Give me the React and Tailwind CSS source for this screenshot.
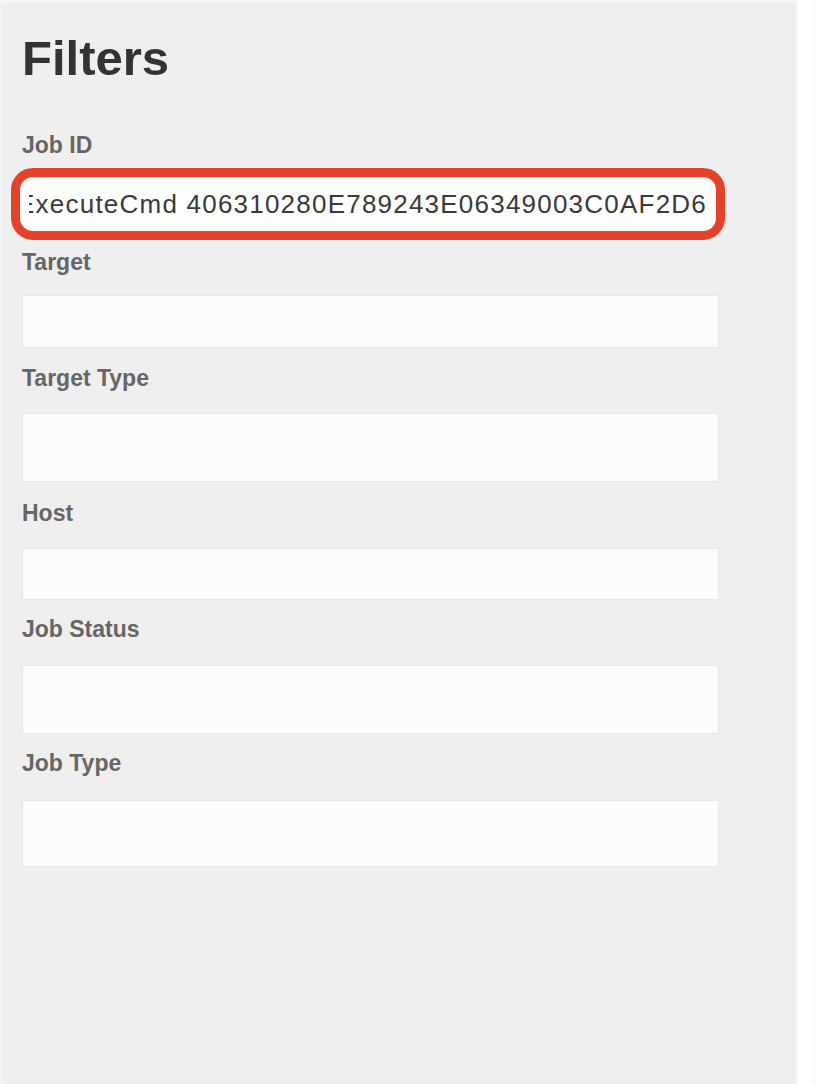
export default function App() {
  return (
    <div className="flex w-[818px] h-[1084px] bg-white font-['Liberation_Sans',Arial,sans-serif]">
      <div className="w-[797px] h-[1084px] bg-[#efefef] border-t-[3px] border-l border-[#f6f6f6] pl-[21px] pt-[31px]">
        <h1 className="text-[49px] leading-[48px] font-bold text-[#333]">Filters</h1>

        <label className="block mt-[52px] text-[23px] leading-[23px] font-bold text-[#666]">Job ID</label>
        <div className="mt-[11px] ml-[-11px] w-[714px] h-[72px] border-[9px] border-[#e8412a] rounded-[22px] bg-[#e8412a]">
          <div className="h-full bg-[#fdfdfd] rounded-[13px] flex items-center px-[9px]">
            <div className="flex-1 flex justify-end overflow-hidden whitespace-nowrap text-[26px] tracking-[1.22px] text-[#3a3a3a]">
              ExecuteCmd 406310280E789243E06349003C0AF2D6
            </div>
          </div>
        </div>

        <label className="block mt-[11px] text-[23px] leading-[23px] font-bold text-[#666]">Target</label>
        <div className="mt-[21px] w-[697px] h-[53px] bg-[#fbfcfb] border border-[#e8e8e8]" />

        <label className="block mt-[19px] text-[23px] leading-[23px] font-bold text-[#666]">Target Type</label>
        <div className="mt-[23px] w-[697px] h-[69px] bg-[#fbfcfb] border border-[#e8e8e8]" />

        <label className="block mt-[20px] text-[23px] leading-[23px] font-bold text-[#666]">Host</label>
        <div className="mt-[23px] w-[697px] h-[52px] bg-[#fbfcfb] border border-[#e8e8e8]" />

        <label className="block mt-[18px] text-[23px] leading-[23px] font-bold text-[#666]">Job Status</label>
        <div className="mt-[24px] w-[697px] h-[69px] bg-[#fbfcfb] border border-[#e8e8e8]" />

        <label className="block mt-[18px] text-[23px] leading-[23px] font-bold text-[#666]">Job Type</label>
        <div className="mt-[25px] w-[697px] h-[67px] bg-[#fbfcfb] border border-[#e8e8e8]" />
      </div>
      <div className="flex-1 border-r border-[#f4f4f4] mr-[3px]" />
    </div>
  );
}
